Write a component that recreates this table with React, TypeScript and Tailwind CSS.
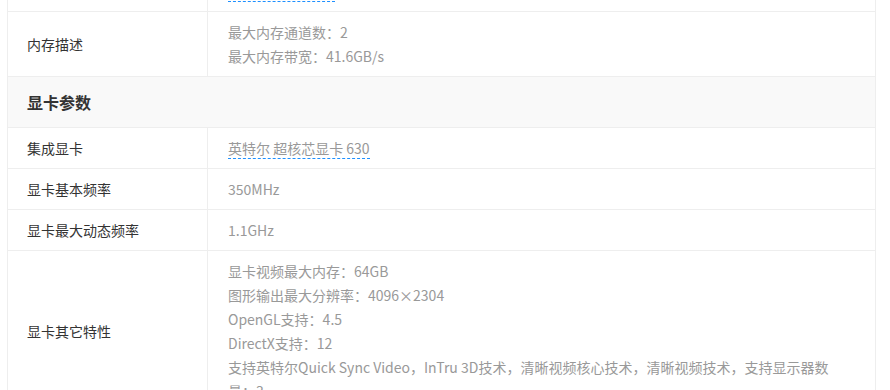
type Row = {
  label: string;
  values: string[];
  link?: boolean;
};

const memoryRows: Row[] = [
  { label: "内存类型", values: ["DDR4 2400/2666"], link: true },
  { label: "内存描述", values: ["最大内存通道数：2", "最大内存带宽：41.6GB/s"] },
];

const gpuRows: Row[] = [
  { label: "集成显卡", values: ["英特尔 超核芯显卡 630"], link: true },
  { label: "显卡基本频率", values: ["350MHz"] },
  { label: "显卡最大动态频率", values: ["1.1GHz"] },
  {
    label: "显卡其它特性",
    values: [
      "显卡视频最大内存：64GB",
      "图形输出最大分辨率：4096×2304",
      "OpenGL支持：4.5",
      "DirectX支持：12",
      "支持英特尔Quick Sync Video，InTru 3D技术，清晰视频核心技术，清晰视频技术，支持显示器数量：3",
    ],
  },
];

function SpecRow({ label, values, link }: Row) {
  return (
    <div className="flex border-b border-[#eeeeee]">
      <div className="w-[200px] shrink-0 border-r border-[#eeeeee] pl-[19px] pr-4 flex items-center text-[14px] leading-6 text-[#333333]">
        {label}
      </div>
      <div className="flex-1 py-2 pl-5 pr-5 text-[14px] leading-6 text-[#999999]">
        {values.map((v) =>
          link ? (
            <div key={v}>
              <span className="border-b border-dashed border-[#1e90ff]">{v}</span>
            </div>
          ) : (
            <div key={v}>{v}</div>
          )
        )}
      </div>
    </div>
  );
}

function SectionHead({ title }: { title: string }) {
  return (
    <div className="h-[51px] flex items-center bg-[#f9f9f9] border-b border-[#eeeeee] pl-[19px] text-[16px] font-bold text-[#333333]">
      {title}
    </div>
  );
}

export default function App() {
  return (
    <div
      className="h-[390px] w-[890px] overflow-hidden bg-white"
      style={{ fontFamily: '"Noto Sans CJK SC", "Noto Sans", sans-serif' }}
    >
      <div className="-mt-[29px] ml-[7px] w-[869px] border-x border-[#eeeeee]">
        {memoryRows.map((r) => (
          <SpecRow key={r.label} {...r} />
        ))}
        <SectionHead title="显卡参数" />
        {gpuRows.map((r) => (
          <SpecRow key={r.label} {...r} />
        ))}
      </div>
    </div>
  );
}
